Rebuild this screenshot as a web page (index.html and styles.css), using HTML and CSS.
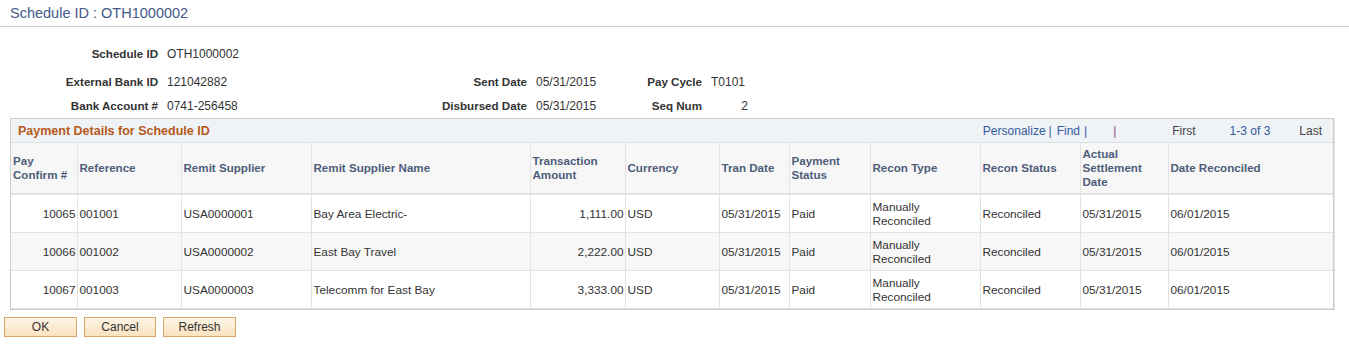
FILE: index.html
```html
<!DOCTYPE html>
<html lang="en">
<head>
  <meta charset="UTF-8">
  <meta name="viewport" content="width=device-width, initial-scale=1.0">
  <title>Schedule ID : OTH1000002</title>
  <link rel="stylesheet" href="styles.css">
</head>
<body>
  <div class="page-title">Schedule ID : OTH1000002</div>

  <div class="info">
    <span class="lbl first">Schedule ID</span>
    <span class="val first">OTH1000002</span>
    <span></span><span></span><span></span><span></span>

    <span class="lbl">External Bank ID</span>
    <span class="val">121042882</span>
    <span class="lbl">Sent Date</span>
    <span class="val">05/31/2015</span>
    <span class="lbl">Pay Cycle</span>
    <span class="val">T0101</span>

    <span class="lbl">Bank Account #</span>
    <span class="val">0741-256458</span>
    <span class="lbl">Disbursed Date</span>
    <span class="val">05/31/2015</span>
    <span class="lbl">Seq Num</span>
    <span class="val num">2</span>
  </div>

  <div class="grid">
    <div class="grid-head">
      <span class="grid-title">Payment Details for Schedule ID</span>
      <div class="grid-nav">
        <a class="link">Personalize</a>
        <span class="sep">|</span>
        <a class="link">Find</a>
        <span class="sep">|</span>
        <span class="sep purple">|</span>
        <span class="plain first-nav">First</span>
        <a class="link count">1-3 of 3</a>
        <span class="plain last-nav">Last</span>
      </div>
    </div>
    <table>
      <colgroup>
        <col style="width:66px"><col style="width:104px"><col style="width:130px">
        <col style="width:219px"><col style="width:95px"><col style="width:94px">
        <col style="width:70px"><col style="width:81px"><col style="width:110px">
        <col style="width:100px"><col style="width:88px"><col style="width:165px">
      </colgroup>
      <thead>
        <tr>
          <th>Pay<br>Confirm #</th>
          <th>Reference</th>
          <th>Remit Supplier</th>
          <th>Remit Supplier Name</th>
          <th>Transaction<br>Amount</th>
          <th>Currency</th>
          <th>Tran Date</th>
          <th>Payment<br>Status</th>
          <th>Recon Type</th>
          <th>Recon Status</th>
          <th>Actual<br>Settlement<br>Date</th>
          <th>Date Reconciled</th>
        </tr>
      </thead>
      <tbody>
        <tr>
          <td class="num">10065</td><td>001001</td><td>USA0000001</td><td>Bay Area Electric-</td>
          <td class="num">1,111.00</td><td>USD</td><td>05/31/2015</td><td>Paid</td>
          <td>Manually<br>Reconciled</td><td>Reconciled</td><td>05/31/2015</td><td>06/01/2015</td>
        </tr>
        <tr class="alt">
          <td class="num">10066</td><td>001002</td><td>USA0000002</td><td>East Bay Travel</td>
          <td class="num">2,222.00</td><td>USD</td><td>05/31/2015</td><td>Paid</td>
          <td>Manually<br>Reconciled</td><td>Reconciled</td><td>05/31/2015</td><td>06/01/2015</td>
        </tr>
        <tr>
          <td class="num">10067</td><td>001003</td><td>USA0000003</td><td>Telecomm for East Bay</td>
          <td class="num">3,333.00</td><td>USD</td><td>05/31/2015</td><td>Paid</td>
          <td>Manually<br>Reconciled</td><td>Reconciled</td><td>05/31/2015</td><td>06/01/2015</td>
        </tr>
      </tbody>
    </table>
  </div>

  <div class="buttons">
    <button class="btn">OK</button>
    <button class="btn cancel">Cancel</button>
    <button class="btn">Refresh</button>
  </div>
</body>
</html>
```

FILE: styles.css
```css
body {
  margin: 0;
  font-family: "Liberation Sans", Arial, sans-serif;
  font-size: 12px;
  color: #333;
  background: #fff;
}
.page-title {
  height: 26px;
  line-height: 26px;
  padding-left: 10px;
  font-size: 14.5px;
  color: #45598a;
  border-bottom: 1px solid #cdcdd5;
}
.info {
  display: grid;
  grid-template-columns: 158px 190px 163px 100px 59px 38px;
  column-gap: 8px;
  row-gap: 10px;
  padding-top: 20px;
  line-height: 14px;
}
.info .first {
  margin-bottom: 4px;
}
.lbl {
  font-weight: bold;
  font-size: 11.6px;
  text-align: right;
  color: #333;
}
.val {
  padding-left: 1px;
}
.val.num {
  text-align: right;
}
.grid {
  margin: 5px 0 0 10px;
  width: 1322px;
  border: 1px solid #cbcbcb;
  box-shadow: 1px 0 0 #e3e3e3;
}
.grid-head {
  display: flex;
  align-items: center;
  justify-content: space-between;
  height: 23px;
  padding: 0 11px 0 7px;
  background: #eff3f5;
  border-bottom: 1px solid #dcdfe2;
}
.grid-title {
  font-weight: bold;
  font-size: 12.5px;
  color: #b5591c;
}
.grid-nav {
  display: flex;
  align-items: center;
}
.link {
  color: #3559a0;
}
.sep {
  color: #3559a0;
  margin: 0 4px;
}
.sep:first-of-type {
  margin: 0 5px 0 3px;
}
.sep.purple {
  color: #8a3d8a;
  margin-left: 22px;
}
.plain {
  color: #444;
}
.first-nav {
  margin-left: 52px;
}
.count {
  margin-left: 34px;
}
.last-nav {
  margin-left: 29px;
}
table {
  border-collapse: collapse;
  table-layout: fixed;
  width: 1322px;
}
th, td {
  padding: 0 2px;
  text-align: left;
  vertical-align: middle;
  border-right: 1px solid #e2e2e2;
  line-height: 14px;
}
th:last-child, td:last-child {
  border-right: none;
}
th {
  height: 50px;
  background: #f7f7f7;
  color: #4d5d79;
  font-weight: bold;
  font-size: 11.6px;
  border-bottom: 2px solid #e2e2e2;
}
td {
  height: 37px;
  border-bottom: 1px solid #e2e2e2;
  font-size: 11.8px;
}
td.num {
  text-align: right;
  padding-right: 1px;
}
tr.alt td {
  background: #f7f7f7;
}
.buttons {
  display: flex;
  gap: 7px;
  padding: 7px 0 0 4px;
}
.btn {
  height: 20px;
  width: 73px;
  padding: 0;
  font-family: "Liberation Sans", Arial, sans-serif;
  font-size: 12px;
  color: #333;
  background: linear-gradient(#fdf4e6, #fbe2bd);
  border: 1px solid #d9a56e;
  border-radius: 0;
}
.btn.cancel {
  width: 72px;
}
```
